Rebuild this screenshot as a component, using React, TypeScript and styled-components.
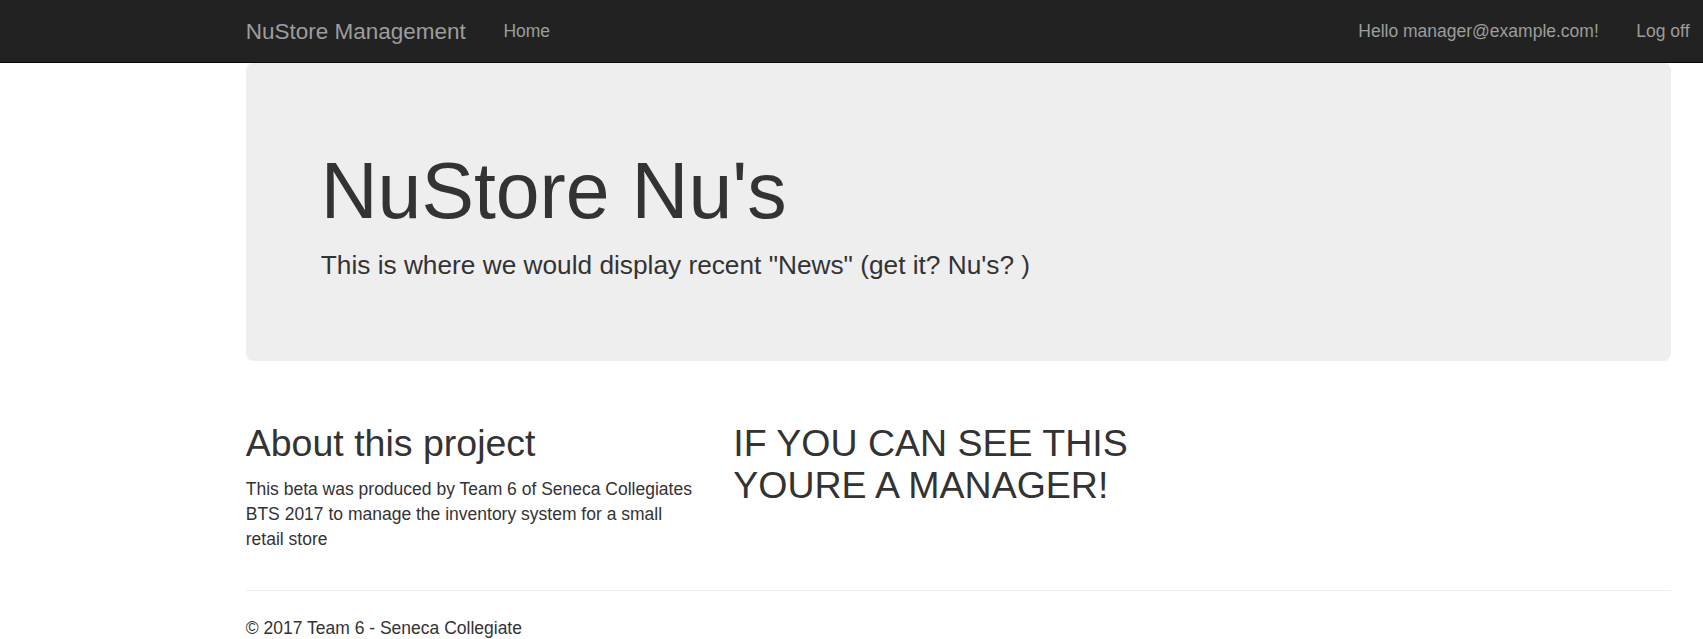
import React from "react";
import styled, { createGlobalStyle } from "styled-components";

const GlobalStyle = createGlobalStyle`
  html, body {
    margin: 0;
    padding: 0;
    overflow: hidden;
    background: #fff;
  }
  body {
    font-family: "Liberation Sans", Arial, Helvetica, sans-serif;
    font-size: 17.5px;
    line-height: 25px;
    color: #333;
  }
  * { box-sizing: border-box; }
`;

const Navbar = styled.nav`
  background: #222;
  border-bottom: 1px solid #080808;
  height: 63px;
`;

const Container = styled.div`
  width: 1462.5px;
  margin-left: 227px;
  padding: 0 18.75px;
`;

const NavInner = styled(Container)`
  display: flex;
  align-items: flex-start;
  height: 62px;
`;

const Brand = styled.a`
  display: block;
  margin-left: -18.75px;
  padding: 18.75px;
  font-size: 22.5px;
  line-height: 25px;
  color: #9d9d9d;
  text-decoration: none;
`;

const NavList = styled.ul<{ $right?: boolean }>`
  display: flex;
  list-style: none;
  margin: 0;
  padding: 0;
  ${(p) => (p.$right ? "margin-left: auto; margin-right: -37.5px;" : "")}
`;

const NavLink = styled.a`
  display: block;
  padding: 18.75px;
  line-height: 25px;
  color: #9d9d9d;
  text-decoration: none;
`;

const Jumbotron = styled.div`
  background: #eee;
  border-radius: 7.5px;
  padding: 60px 75px;
  margin-bottom: 37.5px;
`;

const Title = styled.h1`
  font-size: 78.75px;
  line-height: 1.1;
  font-weight: 400;
  margin: 25px 0 12.5px;
`;

const Lead = styled.p`
  font-size: 26.25px;
  line-height: 1.4;
  font-weight: 300;
  margin: 0 0 17px;
`;

const Row = styled.div`
  display: flex;
  margin: 0 -18.75px;
`;

const Col = styled.div`
  width: 487.5px;
  padding: 0 18.75px;
`;

const Heading = styled.h2`
  font-size: 37.5px;
  line-height: 1.1;
  font-weight: 400;
  margin: 25px 0 12.5px;
`;

const Text = styled.p`
  margin: 0 0 12.5px;
`;

const Rule = styled.hr`
  border: 0;
  border-top: 1px solid #eee;
  margin: 25px 0 25px;
`;

const Footer = styled.footer`
  p {
    margin: 0 0 12.5px;
  }
`;

export default function App() {
  return (
    <>
      <GlobalStyle />
      <Navbar>
        <NavInner>
          <Brand href="#">NuStore Management</Brand>
          <NavList>
            <li>
              <NavLink href="#">Home</NavLink>
            </li>
          </NavList>
          <NavList $right>
            <li>
              <NavLink href="#">Hello manager@example.com!</NavLink>
            </li>
            <li>
              <NavLink href="#">Log off</NavLink>
            </li>
          </NavList>
        </NavInner>
      </Navbar>
      <Container>
        <Jumbotron>
          <Title>NuStore Nu's</Title>
          <Lead>This is where we would display recent "News" (get it? Nu's? )</Lead>
        </Jumbotron>
        <Row>
          <Col>
            <Heading>About this project</Heading>
            <Text>
              This beta was produced by Team 6 of Seneca Collegiates BTS 2017 to
              manage the inventory system for a small retail store
            </Text>
          </Col>
          <Col>
            <Heading>IF YOU CAN SEE THIS YOURE A MANAGER!</Heading>
          </Col>
        </Row>
        <Rule />
        <Footer>
          <p>© 2017 Team 6 - Seneca Collegiate</p>
        </Footer>
      </Container>
    </>
  );
}
